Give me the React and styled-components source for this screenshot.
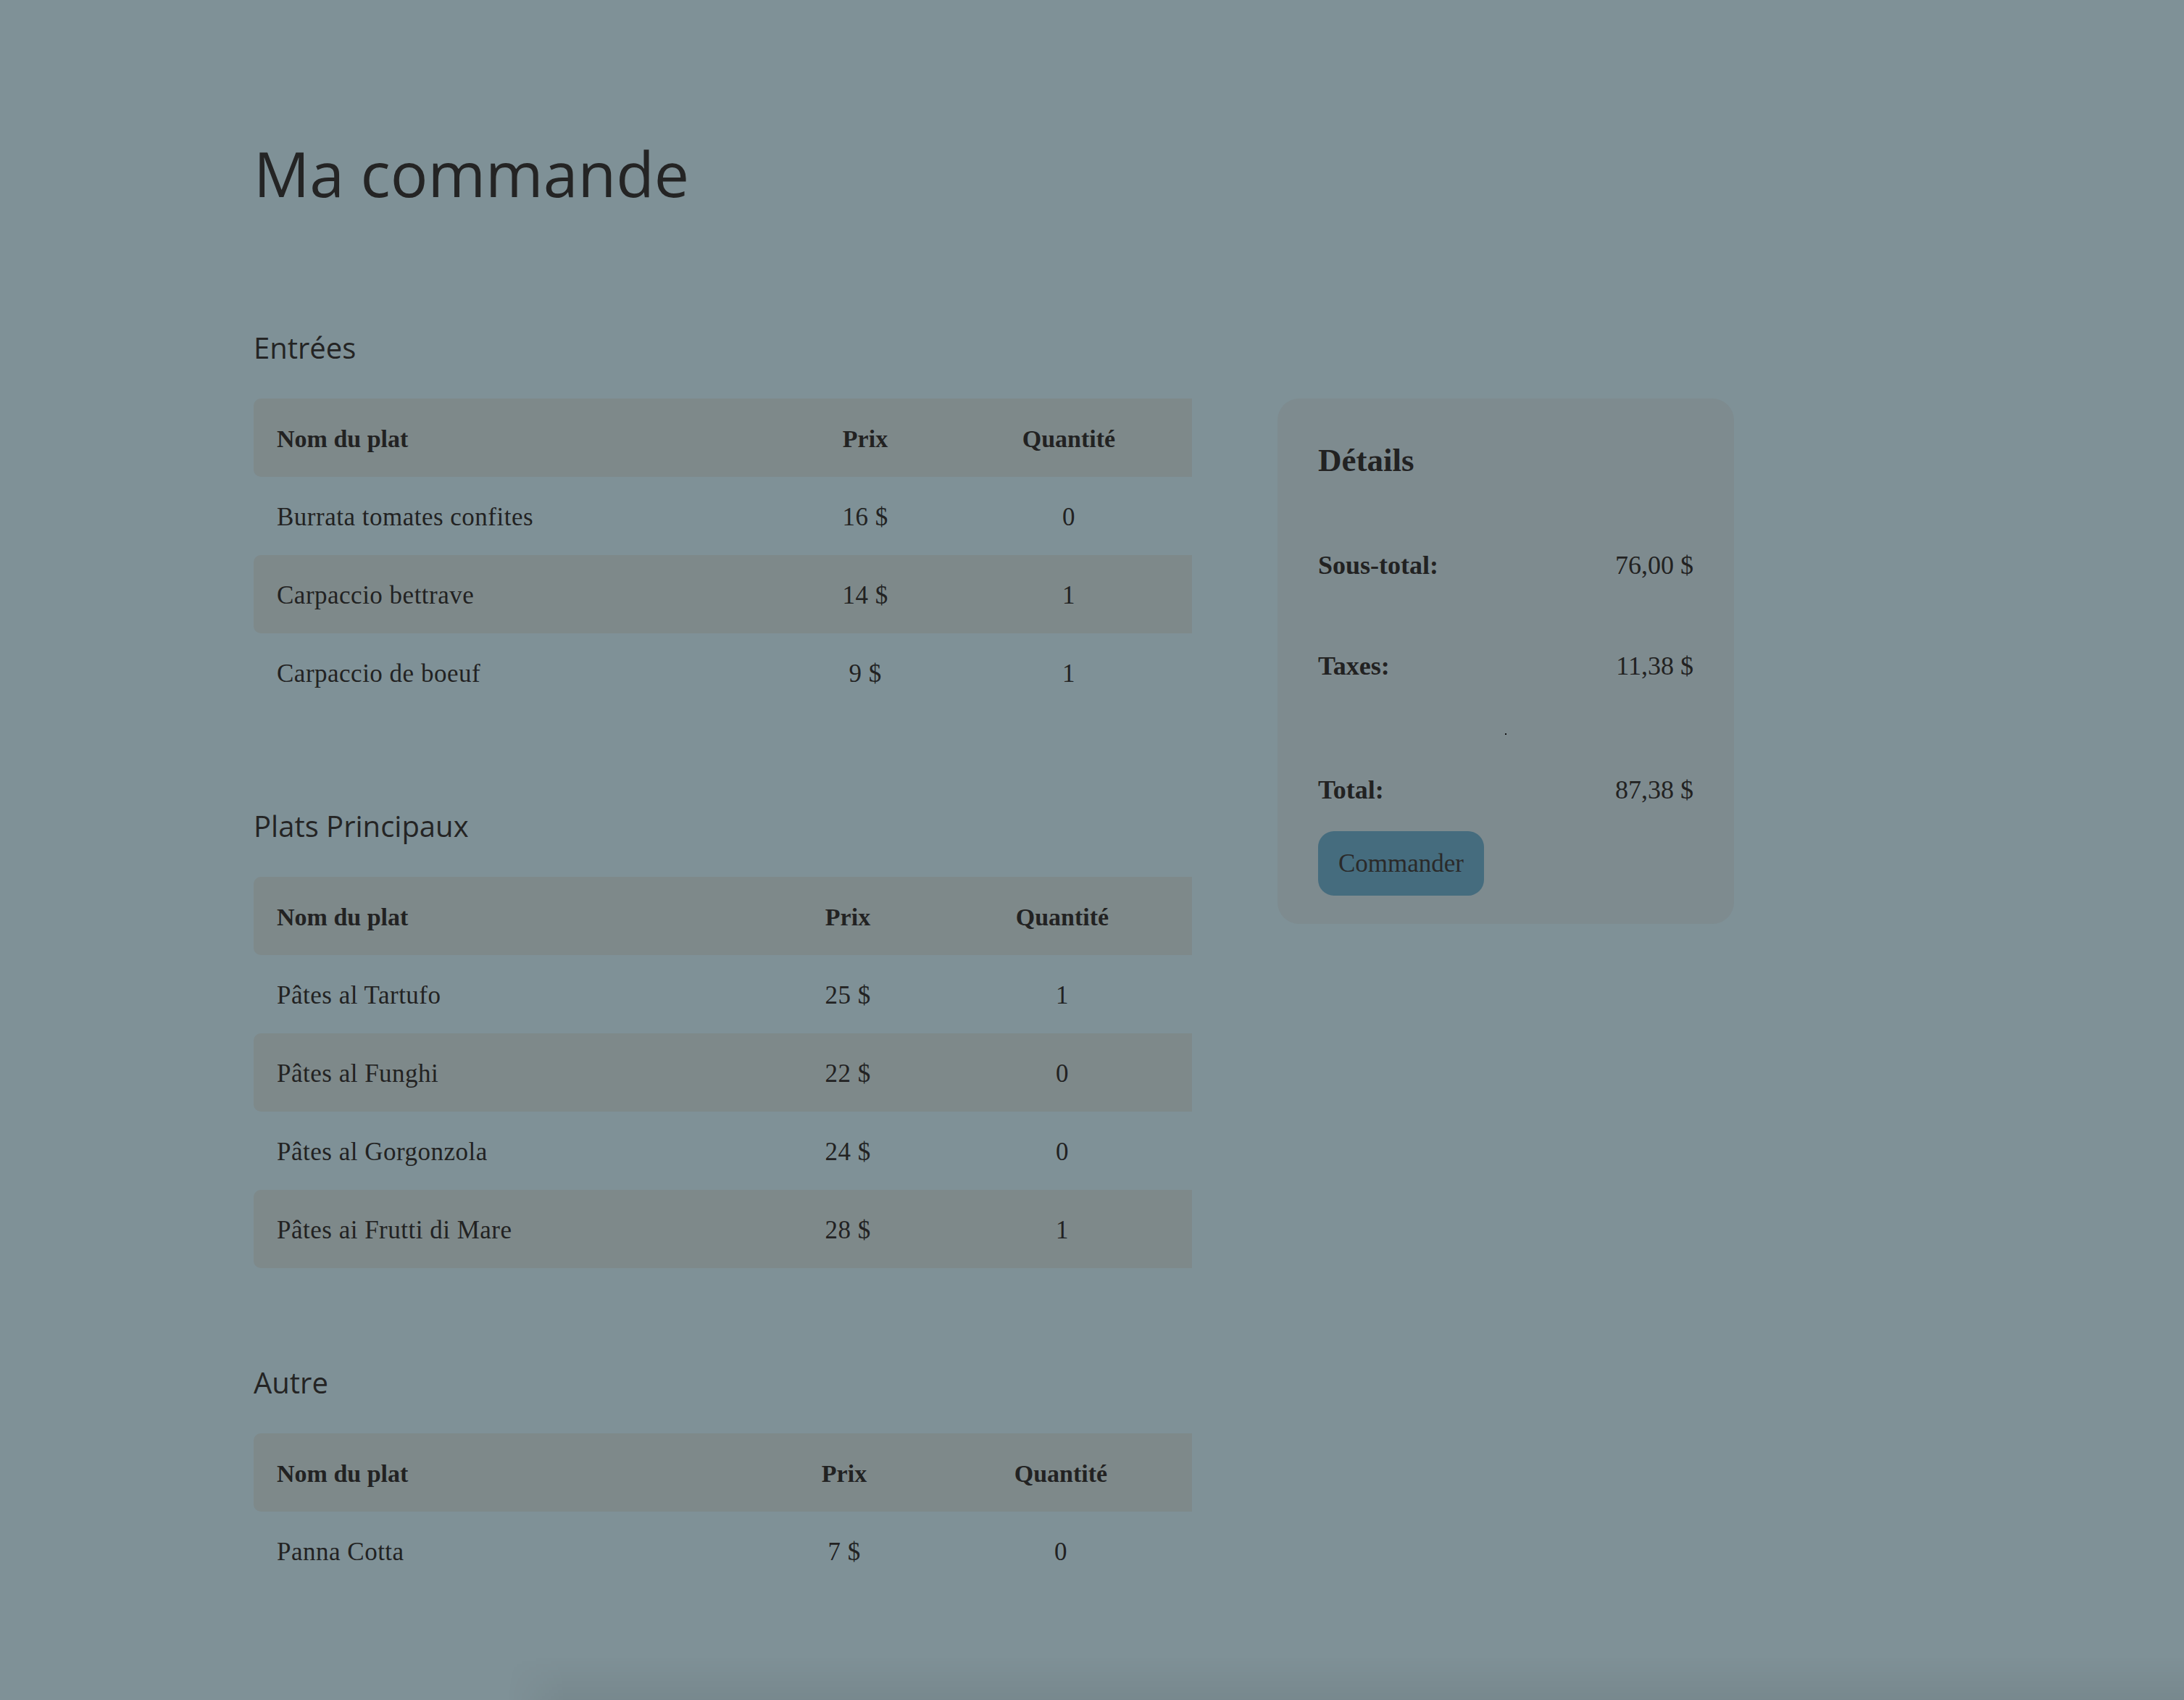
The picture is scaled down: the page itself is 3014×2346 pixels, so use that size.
import styled, { createGlobalStyle } from "styled-components";

const GlobalStyle = createGlobalStyle`
    html, body {
        margin: 0;
        padding: 0;
        background-color: #7f9197;
    }
    body {
        font-family: "Liberation Serif", "Times New Roman", serif;
        color: #222;
    }
`

const entrees = [
    { nom: "Burrata tomates confites", prix: 16, qte: 0 },
    { nom: "Carpaccio bettrave", prix: 14, qte: 1 },
    { nom: "Carpaccio de boeuf", prix: 9, qte: 1 },
]

const plats = [
    { nom: "Pâtes al Tartufo", prix: 25, qte: 1 },
    { nom: "Pâtes al Funghi", prix: 22, qte: 0 },
    { nom: "Pâtes al Gorgonzola", prix: 24, qte: 0 },
    { nom: "Pâtes ai Frutti di Mare", prix: 28, qte: 1 },
]

const autres = [
    { nom: "Panna Cotta", prix: 7, qte: 0 },
]

const sections = [
    { titre: "Entrées", plats: entrees, cols: "663px 362px 200px 1fr" },
    { titre: "Plats Principaux", plats: plats, cols: "624px 392px 200px 1fr" },
    { titre: "Autre", plats: autres, cols: "616px 398px 200px 1fr" },
]

function MenuTable({ items, cols }) {
    return (
        <Table>
            <Row $cols={cols} $shaded>
                <NameCell $head>Nom du plat</NameCell>
                <Cell $head>Prix</Cell>
                <Cell $head>Quantité</Cell>
            </Row>
            {items.map((item, i) => (
                <Row key={item.nom} $cols={cols} $shaded={i % 2 === 1}>
                    <NameCell>{item.nom}</NameCell>
                    <Cell>{item.prix} $</Cell>
                    <Cell>{item.qte}</Cell>
                </Row>
            ))}
        </Table>
    )
}

function App() {
    return (
        <Page>
            <GlobalStyle />
            <Title>Ma commande</Title>
            <Layout>
                <Main>
                    {sections.map((s) => (
                        <Section key={s.titre}>
                            <SectionTitle>{s.titre}</SectionTitle>
                            <MenuTable items={s.plats} cols={s.cols} />
                        </Section>
                    ))}
                </Main>
                <DetailsCard>
                    <DetailsTitle>Détails</DetailsTitle>
                    <SummaryRow $top={104}>
                        <strong>Sous-total:</strong>
                        <span>76,00 $</span>
                    </SummaryRow>
                    <SummaryRow $top={103}>
                        <strong>Taxes:</strong>
                        <span>11,38 $</span>
                    </SummaryRow>
                    <Divider />
                    <SummaryRow $top={0}>
                        <strong>Total:</strong>
                        <span>87,38 $</span>
                    </SummaryRow>
                    <OrderButton>Commander</OrderButton>
                </DetailsCard>
            </Layout>
            <BottomShade />
        </Page>
    )
}

export default App

const Page = styled.div`
    position: relative;
    box-sizing: border-box;
    min-height: 100vh;
    padding: 196px 0 146px 350px;
    display: flex;
    flex-direction: column;
`

const Title = styled.h1`
    margin: 0;
    font-family: "Open Sans", sans-serif;
    font-size: 86px;
    font-weight: 400;
    line-height: 1;
    color: #242424;
`

const Layout = styled.div`
    display: flex;
    align-items: flex-start;
    gap: 118px;
    margin-top: 178px;
`

const Main = styled.div`
    display: flex;
    flex-direction: column;
    width: 1295px;
`

const Section = styled.section`
    & + & {
        margin-top: 138px;
    }
`

const SectionTitle = styled.h2`
    margin: 0 0 50px 0;
    font-family: "Open Sans", sans-serif;
    font-size: 40px;
    font-weight: 400;
    line-height: 1;
    color: #242424;
`

const Table = styled.div`
    display: flex;
    flex-direction: column;
`

const Row = styled.div`
    display: grid;
    grid-template-columns: ${(p) => p.$cols};
    align-items: center;
    height: 108px;
    border-radius: 10px 0 0 10px;
    background-color: ${(p) => (p.$shaded ? "#7e898a" : "transparent")};
`

const Cell = styled.div`
    padding-top: 3px;
    text-align: center;
    font-size: ${(p) => (p.$head ? "34px" : "35px")};
    font-weight: ${(p) => (p.$head ? 700 : 400)};
    letter-spacing: ${(p) => (p.$head ? "0" : "0.5px")};
    white-space: nowrap;
`

const NameCell = styled(Cell)`
    text-align: left;
    padding-left: 32px;
`

const DetailsCard = styled.aside`
    box-sizing: border-box;
    width: 630px;
    margin-top: 90px;
    padding: 63px 56px 39px;
    background-color: #7e8b8f;
    border-radius: 30px;
    display: flex;
    flex-direction: column;
`

const DetailsTitle = styled.h3`
    margin: 0;
    font-size: 45px;
    font-weight: 700;
    line-height: 1;
`

const SummaryRow = styled.div`
    display: flex;
    justify-content: space-between;
    margin-top: ${(p) => p.$top}px;
    font-size: 36px;
    line-height: 1;

    strong {
        font-weight: 700;
    }
`

const Divider = styled.div`
    width: 2px;
    height: 2px;
    margin: 75px auto 58px;
    background-color: #111;
`

const OrderButton = styled.button`
    align-self: flex-start;
    margin-top: 39px;
    width: 229px;
    height: 89px;
    padding: 0;
    border: none;
    border-radius: 22px;
    background-color: #456c7e;
    color: #2a2a2a;
    font-family: "Liberation Serif", serif;
    font-size: 35px;
    cursor: pointer;
`

const BottomShade = styled.div`
    position: absolute;
    left: 700px;
    right: 0;
    bottom: 0;
    height: 60px;
    background: linear-gradient(to bottom, rgba(0, 0, 0, 0), rgba(0, 0, 0, 0.06));
    mask-image: linear-gradient(to right, transparent, #000 80px);
    -webkit-mask-image: linear-gradient(to right, transparent, #000 80px);
    pointer-events: none;
`
